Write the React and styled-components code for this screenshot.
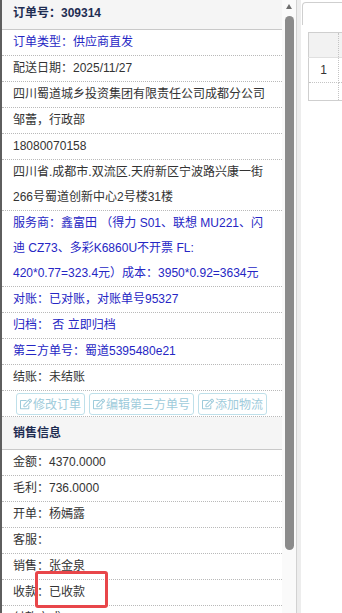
import React from 'react';
import styled, { createGlobalStyle } from 'styled-components';
import { FaRegEdit } from 'react-icons/fa';

const Global = createGlobalStyle`
  html, body { margin: 0; padding: 0; background: #fff; }
  body {
    font-family: "Liberation Sans", "Noto Sans CJK SC", sans-serif;
    font-size: 12px;
    color: #333;
    overflow: hidden;
  }
`;

const Page = styled.div`
  display: flex;
  width: 342px;
  height: 613px;
  overflow: hidden;
`;

const LeftPanel = styled.div`
  display: flex;
  flex: none;
  width: 294px;
  height: 100%;
  border-left: 2px solid #5e5e5e;
  border-right: 1px solid #d2d2d2;
`;

const Content = styled.div`
  flex: 1;
  min-width: 0;
  overflow: hidden;
  position: relative;
`;

const Scrolled = styled.div`
  margin-top: -3px;
`;

const SectionHeader = styled.div`
  height: 32px;
  line-height: 32px;
  padding-left: 11px;
  background: #f5f5f5;
  border-bottom: 1px solid #c9c9c9;
  font-weight: bold;
  color: #1f2d52;
`;

const Row = styled.div`
  position: relative;
  padding: 0 8px 0 11px;
  line-height: 25px;
  border-bottom: 1px dotted #b9b9b9;
  color: ${p => (p.$blue ? '#2626c4' : '#333')};
  white-space: nowrap;
`;

const ButtonRow = styled.div`
  display: flex;
  align-items: center;
  gap: 4px;
  height: 25px;
  padding-left: 14px;
  border-bottom: 1px dotted #b9b9b9;
`;

const ActionButton = styled.span`
  display: inline-flex;
  align-items: center;
  gap: 1px;
  height: 20px;
  padding: 0 3px 0 3px;
  border: 1px solid #bfe0ea;
  border-radius: 3px;
  color: #9ecbdb;
  font-size: 12px;
  background: #fff;
  svg { width: 12px; height: 12px; }
`;

const Highlight = styled.div`
  position: absolute;
  left: 33px;
  top: -9px;
  width: 67px;
  height: 31px;
  border: 3px solid #e8464a;
  border-radius: 3px;
  pointer-events: none;
`;

const ScrollTrack = styled.div`
  flex: none;
  width: 14px;
  background: #fafafa;
  display: flex;
  flex-direction: column;
  align-items: center;
`;

const UpArrow = styled.div`
  margin-top: 4px;
  width: 0;
  height: 0;
  border-left: 3.5px solid transparent;
  border-right: 3.5px solid transparent;
  border-bottom: 5px solid #6e6e6e;
`;

const Thumb = styled.div`
  margin-top: 7px;
  width: 9px;
  height: 534px;
  background: #8b8b8b;
  border-radius: 5px;
`;

const Gutter = styled.div`
  flex: none;
  width: 4px;
  background: #ededed;
`;

const RightPanel = styled.div`
  flex: 1;
  min-width: 0;
  overflow: hidden;
  background: #fff;
`;

const TabBar = styled.div`
  display: flex;
  padding: 2px 0 0 1px;
  height: 23px;
`;

const Tab = styled.div`
  flex: none;
  width: 90px;
  height: 23px;
  border: 1px solid #cfcfcf;
  border-bottom: none;
  border-radius: 4px 4px 0 0;
  box-sizing: border-box;
`;

const Grid = styled.table`
  margin: 7px 0 0 7px;
  border-collapse: collapse;
  border-left: 1px solid #cfcfcf;
  border-top: 1px solid #cfcfcf;
  width: 120px;
  font-size: 12px;
  color: #333;
`;

const Cell = styled.td`
  width: ${p => (p.$first ? '29px' : 'auto')};
  height: ${p => p.$h}px;
  padding: 0;
  text-align: center;
  background: ${p => (p.$head ? '#f2f2f2' : '#fff')};
  border-right: 1px dotted #c4c4c4;
  border-bottom: 1px ${p => (p.$last ? 'solid #cfcfcf' : p.$head ? 'solid #e0e0e0' : 'dotted #c4c4c4')};
`;

export default function App() {
  return (
    <>
      <Global />
      <Page>
        <LeftPanel>
          <Content>
            <Scrolled>
              <SectionHeader>订单号：309314</SectionHeader>
              <Row $blue>订单类型：供应商直发</Row>
              <Row>配送日期：2025/11/27</Row>
              <Row>四川蜀道城乡投资集团有限责任公司成都分公司</Row>
              <Row>邹蕾，行政部</Row>
              <Row>18080070158</Row>
              <Row>
                四川省.成都市.双流区.天府新区宁波路兴康一街
                <br />
                266号蜀道创新中心2号楼31楼
              </Row>
              <Row $blue>
                服务商：鑫富田 （得力 S01、联想 MU221、闪
                <br />
                迪 CZ73、多彩K6860U不开票 FL:
                <br />
                420*0.77=323.4元）成本：3950*0.92=3634元
              </Row>
              <Row $blue>对账：已对账，对账单号95327</Row>
              <Row $blue>归档： 否 立即归档</Row>
              <Row $blue>第三方单号：蜀道5395480e21</Row>
              <Row>结账：未结账</Row>
              <ButtonRow>
                <ActionButton><FaRegEdit />修改订单</ActionButton>
                <ActionButton><FaRegEdit />编辑第三方单号</ActionButton>
                <ActionButton><FaRegEdit />添加物流</ActionButton>
              </ButtonRow>
              <SectionHeader>销售信息</SectionHeader>
              <Row>金额：4370.0000</Row>
              <Row>毛利：736.0000</Row>
              <Row>开单：杨嫣露</Row>
              <Row>客服：</Row>
              <Row>销售：张金泉</Row>
              <Row>
                收款：已收款
                <Highlight />
              </Row>
              <Row>付款方式：</Row>
            </Scrolled>
          </Content>
          <ScrollTrack>
            <UpArrow />
            <Thumb />
          </ScrollTrack>
        </LeftPanel>
        <Gutter />
        <RightPanel>
          <TabBar>
            <Tab />
          </TabBar>
          <Grid>
            <tbody>
              <tr>
                <Cell $first $head $h={24} />
                <Cell $head $h={24} />
              </tr>
              <tr>
                <Cell $first $h={24}>1</Cell>
                <Cell $h={24} />
              </tr>
              <tr>
                <Cell $first $last $h={17} />
                <Cell $last $h={17} />
              </tr>
            </tbody>
          </Grid>
        </RightPanel>
      </Page>
    </>
  );
}
